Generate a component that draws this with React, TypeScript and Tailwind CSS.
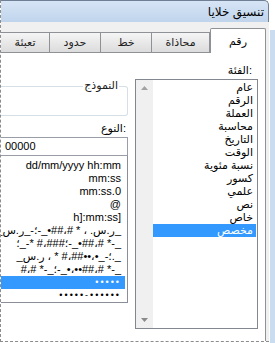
const TABS = [
  { label: "تعبئة", w: "w-[49px]" },
  { label: "حدود", w: "w-[51px]" },
  { label: "خط", w: "w-[51px]" },
  { label: "محاذاة", w: "w-[58px]" },
]

const CATEGORIES = [
  "عام",
  "الرقم",
  "العملة",
  "محاسبة",
  "التاريخ",
  "الوقت",
  "نسبة مئوية",
  "كسور",
  "علمي",
  "نص",
  "خاص",
  "مخصص",
]

const FORMATS = [
  "dd/mm/yyyy hh:mm",
  "mm:ss",
  "mm:ss.0",
  "@",
  "h]:mm:ss]",
  "_ر.س. ، * #،##•_-؛-_ر.س_",
  "؛###،# *-_؛-_•##،# *-_",
  "_؛-_•،••##،# * ، ر.س._",
  "#،# *-_؛-_•،••##،# *-_",
  "•••••",
  "•••••-••••••",
]

const SELECTED_FORMAT = 9

// label with the colon kept on its right, as in the dialog
function Label({ text }: { text: string }) {
  return (
    <div className="h-[14px] flex items-center justify-end">
      <span>{text}</span>
      <span>:</span>
    </div>
  )
}

export default function App() {
  return (
    <div className="w-[275px] h-[343px] bg-white flex overflow-hidden text-black [font-family:Liberation_Sans,DejaVu_Sans,sans-serif]">
      <div className="w-[269px] h-[342px] shrink-0 border-l border-b border-dashed border-[#8c8c8c] flex flex-col">
        {/* Title bar */}
        <div className="h-[22px] shrink-0 bg-gradient-to-b from-[#d7e5f5] to-[#bfd4ec] border-t border-r border-[#6f7f94] rounded-tr-[5px] flex items-center justify-end pr-[4px] text-[12px]">
          تنسيق خلايا
        </div>

        {/* Dialog body */}
        <div className="flex-1 bg-[#f0f0f0] flex flex-col pt-[6px] pr-[3px]">
          {/* Tabs */}
          <div className="h-[24px] shrink-0 flex items-end text-[11px]">
            {TABS.map((t) => (
              <div
                key={t.label}
                className={`${t.w} h-[20px] shrink-0 border-t border-r border-[#8e9196] bg-gradient-to-b from-[#f5f5f5] to-[#dcdcdc] flex items-center justify-center text-[#222]`}
              >
                {t.label}
              </div>
            ))}
            <div className="w-[56px] h-[25px] -mb-px shrink-0 border-t border-x border-[#8e9196] bg-white flex items-center justify-center z-10 rounded-t-[2px]">
              رقم
            </div>
          </div>

          {/* Panel */}
          <div className="flex-1 bg-white border-t border-r border-[#8e9196] flex text-[11px] leading-[13px]">
            {/* Left: sample + type */}
            <div className="w-[127px] shrink-0 flex flex-col">
              <div className="relative mt-[33px] h-[30px] border-y border-r border-[#d5dfe5] rounded-r-[3px]">
                <span className="absolute right-[8px] top-[-8px] bg-white px-[1px] text-[#222]">النموذج</span>
              </div>
              <div className="mt-[5px] pr-[2px]">
                <Label text="النوع" />
              </div>
              <div className="mt-[2px] h-[19px] border-y border-r border-[#999da5] flex items-center pl-[4px]">
                00000
              </div>
              <div className="h-[147px] border-b border-r border-[#8a8e96] pt-[3px] flex flex-col overflow-hidden">
                {FORMATS.map((f, i) => (
                  <div
                    key={i}
                    className={`h-[13px] shrink-0 mr-[2px] pr-[4px] flex justify-end overflow-hidden ${
                      i === SELECTED_FORMAT ? "bg-[#3399ff] text-white" : ""
                    }`}
                  >
                    <span
                      className={`shrink-0 whitespace-nowrap ${
                        i >= SELECTED_FORMAT ? "tracking-[2px] text-[9px]" : ""
                      }`}
                    >
                      {f}
                    </span>
                  </div>
                ))}
              </div>
            </div>

            {/* Right: category */}
            <div className="flex-1 flex flex-col pl-[7px] pr-[7px] pt-[10px]">
              <div className="pr-[6px]">
                <Label text="الفئة" />
              </div>
              <div className="mt-[2px] h-[250px] border border-[#828790] flex">
                <div className="w-[17px] shrink-0 bg-[#f0f0f0] flex flex-col items-center justify-between py-[6px]">
                  <svg width="7" height="4" viewBox="0 0 7 4">
                    <path d="M0 4 L3.5 0 L7 4 Z" fill="#a3a3a3" />
                  </svg>
                  <svg width="7" height="4" viewBox="0 0 7 4">
                    <path d="M0 0 L7 0 L3.5 4 Z" fill="#8a8a8a" />
                  </svg>
                </div>
                <div className="flex-1 pt-[1px] flex flex-col">
                  {CATEGORIES.map((c, i) => (
                    <div
                      key={c}
                      className={`h-[13px] flex items-center justify-end pr-[3px] mr-[1px] ${
                        i === CATEGORIES.length - 1 ? "bg-[#3399ff] text-white" : ""
                      }`}
                    >
                      {c}
                    </div>
                  ))}
                </div>
              </div>
            </div>
          </div>
        </div>
      </div>

      {/* Window frame edge */}
      <div className="flex-1 flex flex-col pt-[30px]">
        <div className="flex-1 ml-[1px] bg-[#cadcf0]" />
      </div>
    </div>
  )
}
